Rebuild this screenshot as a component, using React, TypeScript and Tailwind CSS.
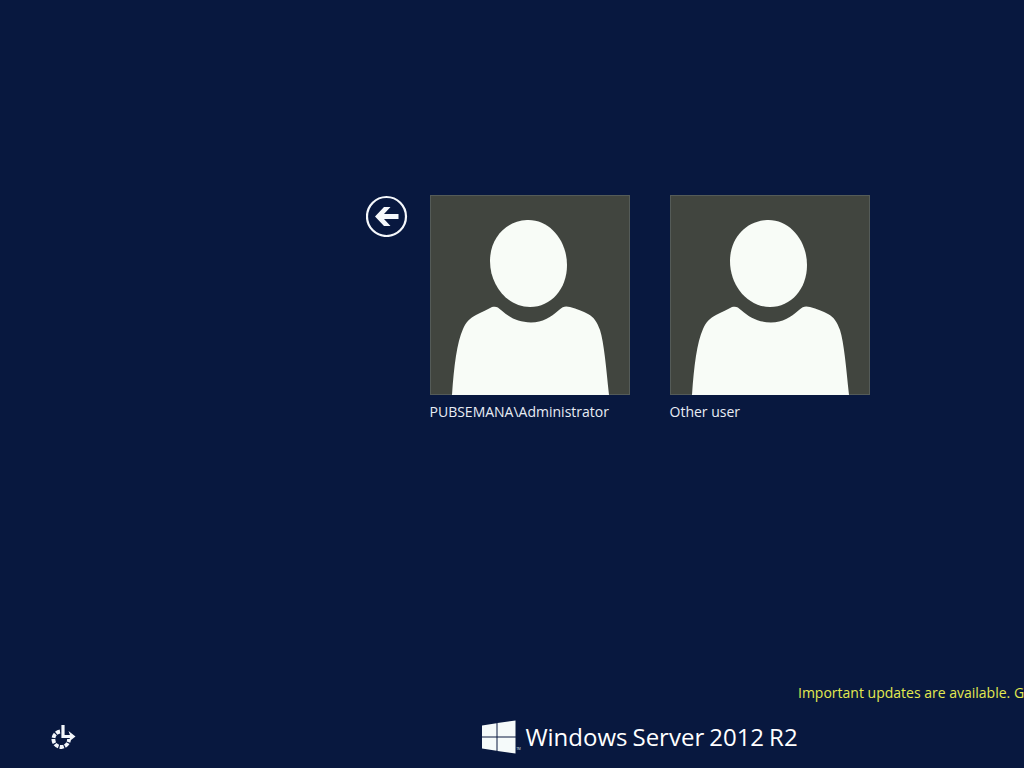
const accounts = ['PUBSEMANA\\Administrator', 'Other user'];

function Avatar() {
  return (
    <svg viewBox="0 0 200 200" className="block size-[200px]" aria-hidden="true">
      <rect width="200" height="200" fill="#41453f" />
      <rect x=".5" y=".5" width="199" height="199" fill="none" stroke="#545b58" />
      <path
        d="M97 25C119 24 137 45 137 70C137 94 121 112 100 112C78 112 60 91 60 66C60 43 76 26 97 25Z"
        fill="#f8fcf7"
      />
      <path
        d="M22 200C24 171 27 147 33 134C36 127 40 123 46 120C52 117 58 114 62 112C66 111 68 112 71 115C80 123 88 127 101 127.500C113 127 120 123 129 115C133 111 136 111 140 112C147 114 153 116 158 119C164 122 167 127 170 135C174 148 176 171 179 200Z"
        fill="#f8fcf7"
      />
    </svg>
  );
}

function BackIcon() {
  return (
    <svg viewBox="0 0 42 42" className="block size-[42px]" fill="none" aria-hidden="true">
      <circle cx="20.500" cy="21.500" r="19.500" stroke="#f5f8fc" strokeWidth="2.200" />
      <path d="M9 21.500L18 12H24.500L18 19H32.500V24H18L24.500 31H18Z" fill="#f5f8fc" />
    </svg>
  );
}

function EaseOfAccessIcon() {
  return (
    <svg viewBox="0 0 26 26" className="block size-[26px]" fill="none" stroke="#f2f6fb" aria-hidden="true">
      <path d="M10 7.500A7.800 7.800 0 1 0 19 15" strokeWidth="3.800" strokeDasharray="4.200 1.200" />
      <path d="M13 1V12.500H21" strokeWidth="3.200" />
      <path d="M18.500 7L25.500 12.500L18.500 18L20.500 12.500Z" fill="#f2f6fb" stroke="none" />
    </svg>
  );
}

function WindowsLogo() {
  return (
    <svg viewBox="0 0 34 34" className="block size-[34px] shrink-0" fill="#f5fafa" aria-hidden="true">
      <path d="M0 5.500L14.500 3.200V16.400H0Z" />
      <path d="M15.500 3L33.500 .5V16.400H15.500Z" />
      <path d="M0 17.600H14.500V30.700L0 28.500Z" />
      <path d="M15.500 17.600H33.500V33.500L15.500 30.900Z" />
    </svg>
  );
}

export default function App() {
  return (
    <div className="flex min-h-screen flex-col overflow-hidden bg-[#08183f] font-['Open_Sans','Noto_Sans',sans-serif] text-[#e8edf5]">
      <main className="flex flex-1 items-start justify-center pt-[195px] pl-[211px]">
        <button type="button" aria-label="Back" className="mr-[22px] shrink-0 rounded-full">
          <BackIcon />
        </button>
        <ul className="flex gap-10">
          {accounts.map((name) => (
            <li key={name}>
              <button type="button" className="block w-[200px] text-left">
                <Avatar />
                <span className="mt-[7px] block text-sm leading-5 whitespace-nowrap">{name}</span>
              </button>
            </li>
          ))}
        </ul>
      </main>

      <p className="ml-auto w-[226px] overflow-hidden text-sm leading-5 whitespace-nowrap text-[#e3ea50]">
        Important updates are available. Go to PC Settings to install them.
      </p>

      <footer className="grid grid-cols-[1fr_auto_1fr] items-center pt-[13px] pb-[10px]">
        <button type="button" aria-label="Ease of access" className="ml-[50px] justify-self-start">
          <EaseOfAccessIcon />
        </button>
        <div className="ml-64 flex items-center">
          <WindowsLogo />
          <span className="mt-6 w-[5px] text-[3px] leading-none">TM</span>
          <div className="ml-1 flex items-start gap-[5px] text-2xl leading-[42px] whitespace-nowrap text-white">
            <span>Windows</span>
            <span>Server</span>
            <span>2012</span>
            <span>R2</span>
          </div>
        </div>
      </footer>
    </div>
  );
}
